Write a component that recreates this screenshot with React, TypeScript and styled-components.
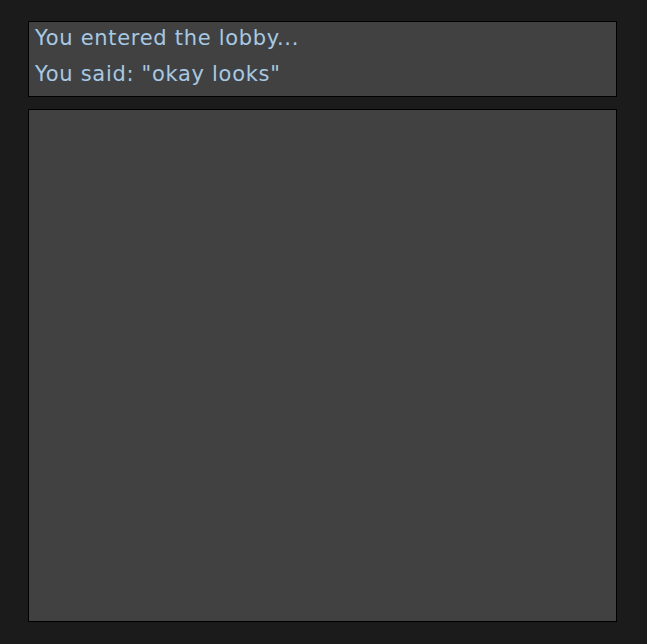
import styled, { createGlobalStyle } from "styled-components";

const GlobalStyle = createGlobalStyle`
  html, body {
    margin: 0;
    padding: 0;
    background-color: #1b1b1b;
  }
`;

const messages = ["You entered the lobby...", 'You said: "okay looks"'];

export default function App() {
  return (
    <>
      <GlobalStyle />
      <Page>
        <Log>
          {messages.map((m) => (
            <Line key={m}>{m}</Line>
          ))}
        </Log>
        <Stage />
      </Page>
    </>
  );
}

const Page = styled.main`
  display: flex;
  flex-direction: column;
  gap: 12px;
  padding: 21px 0 0 28px;
  width: 589px;
`;

const Panel = styled.section`
  background-color: #414141;
  border: 1px solid #000;
`;

const Log = styled(Panel)`
  height: 74px;
  padding: 0 6px;
  display: flex;
  flex-direction: column;
  gap: 4px;
`;

const Line = styled.div`
  font-family: "DejaVu Sans", sans-serif;
  font-size: 21px;
  letter-spacing: 0.7px;
  line-height: 32px;
  color: #a6c9e6;
`;

const Stage = styled(Panel)`
  height: 511px;
`;
